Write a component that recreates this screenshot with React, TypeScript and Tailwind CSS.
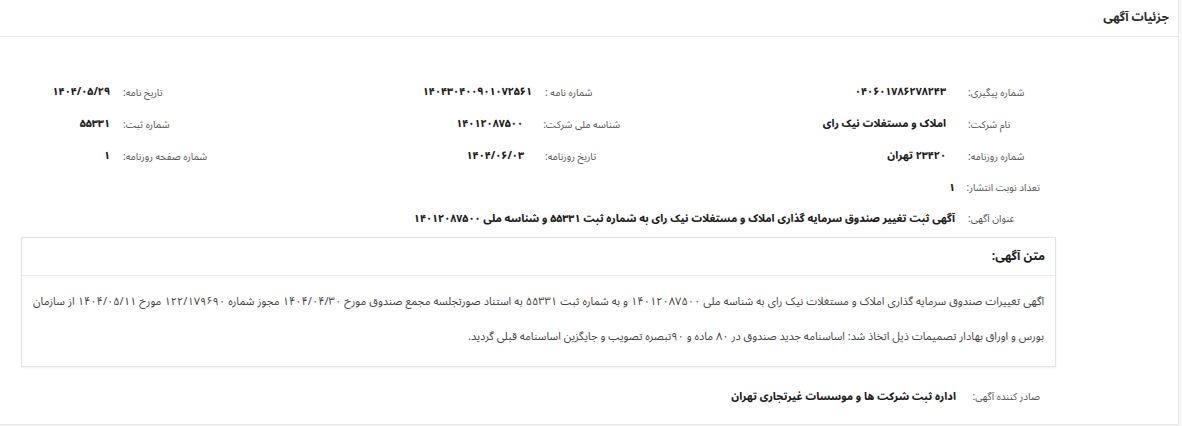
import React from 'react';

const font = { fontFamily: '"Noto Sans Arabic", "DejaVu Sans", sans-serif' };

const labelCls = 'whitespace-nowrap text-left text-[10px] text-[#555]';
const valueCls = 'whitespace-nowrap pt-[2px] text-[10.5px] font-extrabold text-[#1e1e1e]';

function Field({ label, value, gap }: { label: string; value: string; gap: string }) {
  return (
    <>
      <div className={labelCls}>{label}</div>
      <div className={`${valueCls} ${gap}`}>{value}</div>
    </>
  );
}

export default function App() {
  return (
    <div style={font} className="w-[1182px] h-[426px] bg-[#f7f7f7] overflow-hidden">
      <div dir="rtl" className="w-[1179px] h-[425px] bg-white border-r border-b border-[#e6e6e6] flex flex-col">
        <div className="h-[37px] shrink-0 border-b border-[#e6e6e6] flex items-center pr-[9px]">
          <h2 className="text-[12px] font-bold text-[#2a2a2a]">جزئیات آگهی</h2>
        </div>

        <div className="pr-[122px] pl-[21px] pt-[39px] flex flex-col">
          <div className="pr-[16px] grid grid-cols-[72px_348px_75px_335px_87px_1fr] auto-rows-[32px] items-center">
            <Field label="شماره پیگیری:" value="۰۴۰۶۰۱۷۸۶۲۷۸۲۴۳" gap="pr-[22px]" />
            <Field label="شماره نامه :" value="۱۴۰۴۳۰۴۰۰۹۰۱۰۷۲۵۶۱" gap="pr-[13px]" />
            <Field label="تاریخ نامه:" value="۱۴۰۴/۰۵/۲۹" gap="pr-[13px]" />
            <Field label="نام شرکت:" value="املاک و مستغلات نیک رای" gap="pr-[22px]" />
            <Field label="شناسه ملی شرکت:" value="۱۴۰۱۲۰۸۷۵۰۰" gap="pr-[22px]" />
            <Field label="شماره ثبت:" value="۵۵۳۳۱" gap="pr-[13px]" />
            <Field label="شماره روزنامه:" value="۲۳۴۲۰ تهران" gap="pr-[22px]" />
            <Field label="تاریخ روزنامه:" value="۱۴۰۴/۰۶/۰۳" gap="pr-[21px]" />
            <Field label="شماره صفحه روزنامه:" value="۱" gap="pr-[13px]" />
          </div>

          <div className="pr-[16px] h-[31px] flex items-center">
            <div className={`w-[72px] ${labelCls}`}>تعداد نوبت انتشار:</div>
            <div className={`pr-[13px] ${valueCls}`}>۱</div>
          </div>

          <div className="pr-[16px] h-[31px] flex items-center">
            <div className={`w-[72px] ${labelCls}`}>عنوان آگهی:</div>
            <div className={`pr-[13px] ${valueCls}`}>
              آگهی ثبت تغییر صندوق سرمایه گذاری املاک و مستغلات نیک رای به شماره ثبت ۵۵۳۳۱ و شناسه ملی ۱۴۰۱۲۰۸۷۵۰۰
            </div>
          </div>

          <div className="mt-[3px] border border-[#e3e3e3] shadow-[0_1px_2px_rgba(0,0,0,0.06)] bg-white">
            <div className="h-[38px] border-b border-[#ececec] flex items-center pr-[10px]">
              <h3 className="text-[12px] font-bold text-[#1e1e1e]">متن آگهی:</h3>
            </div>
            <p className="px-[11px] pt-[8px] pb-[12px] text-[11px] leading-[35px] text-[#444] text-justify">
              آگهی تغییرات صندوق سرمایه گذاری املاک و مستغلات نیک رای به شناسه ملی ۱۴۰۱۲۰۸۷۵۰۰ و به شماره ثبت ۵۵۳۳۱ به استناد صورتجلسه مجمع صندوق مورخ ۱۴۰۴/۰۴/۳۰ مجوز شماره ۱۲۲/۱۷۹۶۹۰ مورخ ۱۴۰۴/۰۵/۱۱ از سازمان بورس و اوراق بهادار تصمیمات ذیل اتخاذ شد: اساسنامه جدید صندوق در ۸۰ ماده و ۹۰تبصره تصویب و جایگزین اساسنامه قبلی گردید.
            </p>
          </div>

          <div className="pr-[16px] mt-[14px] h-[31px] flex items-center">
            <div className={`w-[66px] ${labelCls}`}>صادر کننده آگهی:</div>
            <div className={`pr-[18px] ${valueCls}`}>اداره ثبت شرکت ها و موسسات غیرتجاری تهران</div>
          </div>
        </div>
      </div>
    </div>
  );
}
